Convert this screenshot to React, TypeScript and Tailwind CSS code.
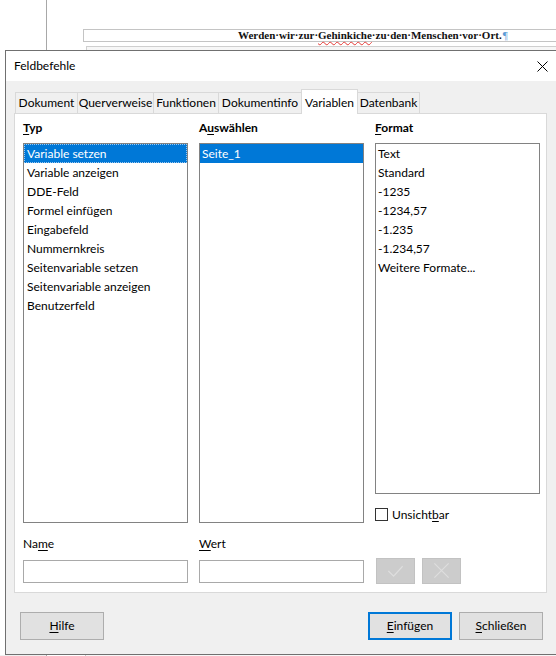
import React from "react";

const typItems = [
  "Variable setzen",
  "Variable anzeigen",
  "DDE-Feld",
  "Formel einfügen",
  "Eingabefeld",
  "Nummernkreis",
  "Seitenvariable setzen",
  "Seitenvariable anzeigen",
  "Benutzerfeld",
];

const formatItems = ["Text", "Standard", "-1235", "-1234,57", "-1.235", "-1.234,57", "Weitere Formate..."];

export default function App() {
  return (
    <div className="w-[556px] h-[656px] overflow-hidden bg-white flex flex-col font-['Lato',sans-serif] text-[12px] text-black">
      {/* document background */}
      <div className="h-[50px] shrink-0 flex">
        <div className="w-[47px] shrink-0 border-r border-[#a8a8a8] bg-white" />
        <div className="flex-1 flex flex-col pt-[29px] pl-[36px]">
          <div className="h-[13px] border border-r-0 border-[#c4c4c4] flex items-center pl-[154px] whitespace-nowrap font-['Liberation_Serif',serif] font-bold text-[11px] leading-[11px] text-[#111]">
            <span>Werden·wir·zur·</span>
            <span className="underline decoration-wavy decoration-[#e53935] decoration-1 underline-offset-2">Gehinkiche</span>
            <span>·zu·den·Menschen·vor·Ort.</span>
            <span className="text-[#5b9bd5] font-normal ml-[1px]">¶</span>
          </div>
          <div className="mt-[4px] ml-[3px] flex-1 border-t border-l border-[#cfcfcf] bg-[#f7f7f7]" />
        </div>
      </div>

      {/* dialog */}
      <div className="ml-[5px] w-[561px] h-[605px] shrink-0 border border-[#707070] bg-[#f0f0f0] flex flex-col">
        {/* title bar */}
        <div className="h-[30px] shrink-0 bg-white flex items-center justify-between">
          <span className="pl-[8px] leading-[16px]">Feldbefehle</span>
          <div className="w-[46px] h-[30px] flex items-center justify-center">
            <svg width="11" height="11" viewBox="0 0 11 11">
              <path d="M0.5 0.5 L10.5 10.5 M10.5 0.5 L0.5 10.5" stroke="#000" strokeWidth="1" />
            </svg>
          </div>
        </div>

        {/* body */}
        <div className="flex-1 flex flex-col pt-[8px]">
          {/* tabs */}
          <div className="ml-[9px] h-[24px] flex items-end">
            <Tab label="Dokument" w="w-[63px]" first />
            <Tab label="Querverweise" w="w-[77px]" />
            <Tab label="Funktionen" w="w-[66px]" />
            <Tab label="Dokumentinfo" w="w-[84px]" />
            <Tab label="Variablen" w="w-[57px]" selected />
            <Tab label="Datenbank" w="w-[63px]" />
          </div>

          {/* tab page */}
          <div className="ml-[8px] w-[533px] h-[480px] shrink-0 border border-[#d9d9d9] bg-white pl-[8px] pt-[6px]">
            <div className="grid grid-cols-[165px_165px_165px] gap-x-[11px]">
              <div className="h-[16px] leading-[16px] font-bold">
                <u className="underline-offset-2">T</u>yp
              </div>
              <div className="h-[16px] leading-[16px] font-bold">
                A<u className="underline-offset-2">u</u>swählen
              </div>
              <div className="h-[16px] leading-[16px] font-bold">
                <u className="underline-offset-2">F</u>ormat
              </div>
            </div>

            <div className="mt-[7px] grid grid-cols-[165px_165px_165px] gap-x-[11px] items-start">
              <div className="h-[380px] border border-[#828282] bg-white pt-0">
                {typItems.map((t, i) =>
                  i === 0 ? (
                    <div
                      key={t}
                      className="h-[19px] leading-[17px] pl-[2px] bg-[#0078d7] text-white border border-dotted border-[#9cc7ee]"
                    >
                      {t}
                    </div>
                  ) : (
                    <div key={t} className="h-[19px] leading-[19px] pl-[3px]">
                      {t}
                    </div>
                  )
                )}
              </div>
              <div className="h-[380px] border border-[#828282] bg-white">
                <div className="h-[19px] leading-[19px] pl-[2px] bg-[#0078d7] text-white">Seite_1</div>
              </div>
              <div className="flex flex-col">
                <div className="h-[351px] border border-[#828282] bg-white">
                  {formatItems.map((t) => (
                    <div key={t} className="h-[19px] leading-[19px] pl-[2px]">
                      {t}
                    </div>
                  ))}
                </div>
                <div className="mt-[14px] h-[13px] flex items-center gap-[4px]">
                  <div className="w-[13px] h-[13px] border border-[#333333] bg-white shrink-0" />
                  <span className="leading-[13px]">
                    Unsicht<u className="underline-offset-2">b</u>ar
                  </span>
                </div>
              </div>
            </div>

            <div className="mt-[13px] grid grid-cols-[165px_165px_165px] gap-x-[11px] items-start">
              <div className="flex flex-col">
                <div className="h-[16px] leading-[16px]">
                  Na<u className="underline-offset-2">m</u>e
                </div>
                <div className="mt-[8px] h-[23px] border border-[#a9a9a9] bg-white" />
              </div>
              <div className="flex flex-col">
                <div className="h-[16px] leading-[16px]">
                  <u className="underline-offset-2">W</u>ert
                </div>
                <div className="mt-[8px] h-[23px] border border-[#a9a9a9] bg-white" />
              </div>
              <div className="pt-[22px] pl-[1px] flex gap-[7px]">
                <div className="w-[39px] h-[26px] border border-[#c2c2c2] bg-[#cccccc] flex items-center justify-center">
                  <svg width="39" height="26" viewBox="0 0 39 26">
                    <path d="M12 13 L17.5 18.5 L27 8" stroke="#dedede" strokeWidth="1.2" fill="none" />
                  </svg>
                </div>
                <div className="w-[39px] h-[26px] border border-[#c2c2c2] bg-[#cccccc] flex items-center justify-center">
                  <svg width="39" height="26" viewBox="0 0 39 26">
                    <path d="M12 5 L27 20 M27 5 L12 20" stroke="#dedede" strokeWidth="1.2" fill="none" />
                  </svg>
                </div>
              </div>
            </div>
          </div>

          {/* bottom buttons */}
          <div className="mt-[19px] pl-[14px] pr-[22px] flex items-center">
            <Button w="w-[84px]">
              <u className="underline-offset-2">H</u>ilfe
            </Button>
            <div className="flex-1" />
            <Button w="w-[84px]" primary>
              <u className="underline-offset-2">E</u>infügen
            </Button>
            <div className="w-[7px]" />
            <Button w="w-[84px]">
              <u className="underline-offset-2">S</u>chließen
            </Button>
          </div>
        </div>
      </div>

      {/* document below */}
      <div className="h-[1px] shrink-0 flex">
        <div className="w-[47px] border-r border-[#a8a8a8] bg-[#f0f0f0]" />
        <div className="w-[39px] border-r border-[#c8c8c8] bg-white" />
        <div className="flex-1 bg-[#f7f7f7]" />
      </div>
    </div>
  );
}

function Tab({ label, w, selected, first }: { label: string; w: string; selected?: boolean; first?: boolean }) {
  if (selected) {
    return (
      <div
        className={`${w} h-[25px] -mb-px -ml-px relative z-10 border border-b-0 border-[#d9d9d9] bg-white flex items-center justify-center pt-[1px] whitespace-nowrap`}
      >
        {label}
      </div>
    );
  }
  return (
    <div
      className={`${w} h-[21px] ${first ? "" : "-ml-px"} border border-b-0 border-[#d9d9d9] bg-[#f0f0f0] flex items-center justify-center whitespace-nowrap`}
    >
      {label}
    </div>
  );
}

function Button({ children, w, primary }: { children: React.ReactNode; w: string; primary?: boolean }) {
  return (
    <div
      className={`${w} h-[28px] ${primary ? "border-2 border-[#0078d7]" : "border border-[#adadad]"} bg-[#e1e1e1] flex items-center justify-center`}
    >
      <span>{children}</span>
    </div>
  );
}
